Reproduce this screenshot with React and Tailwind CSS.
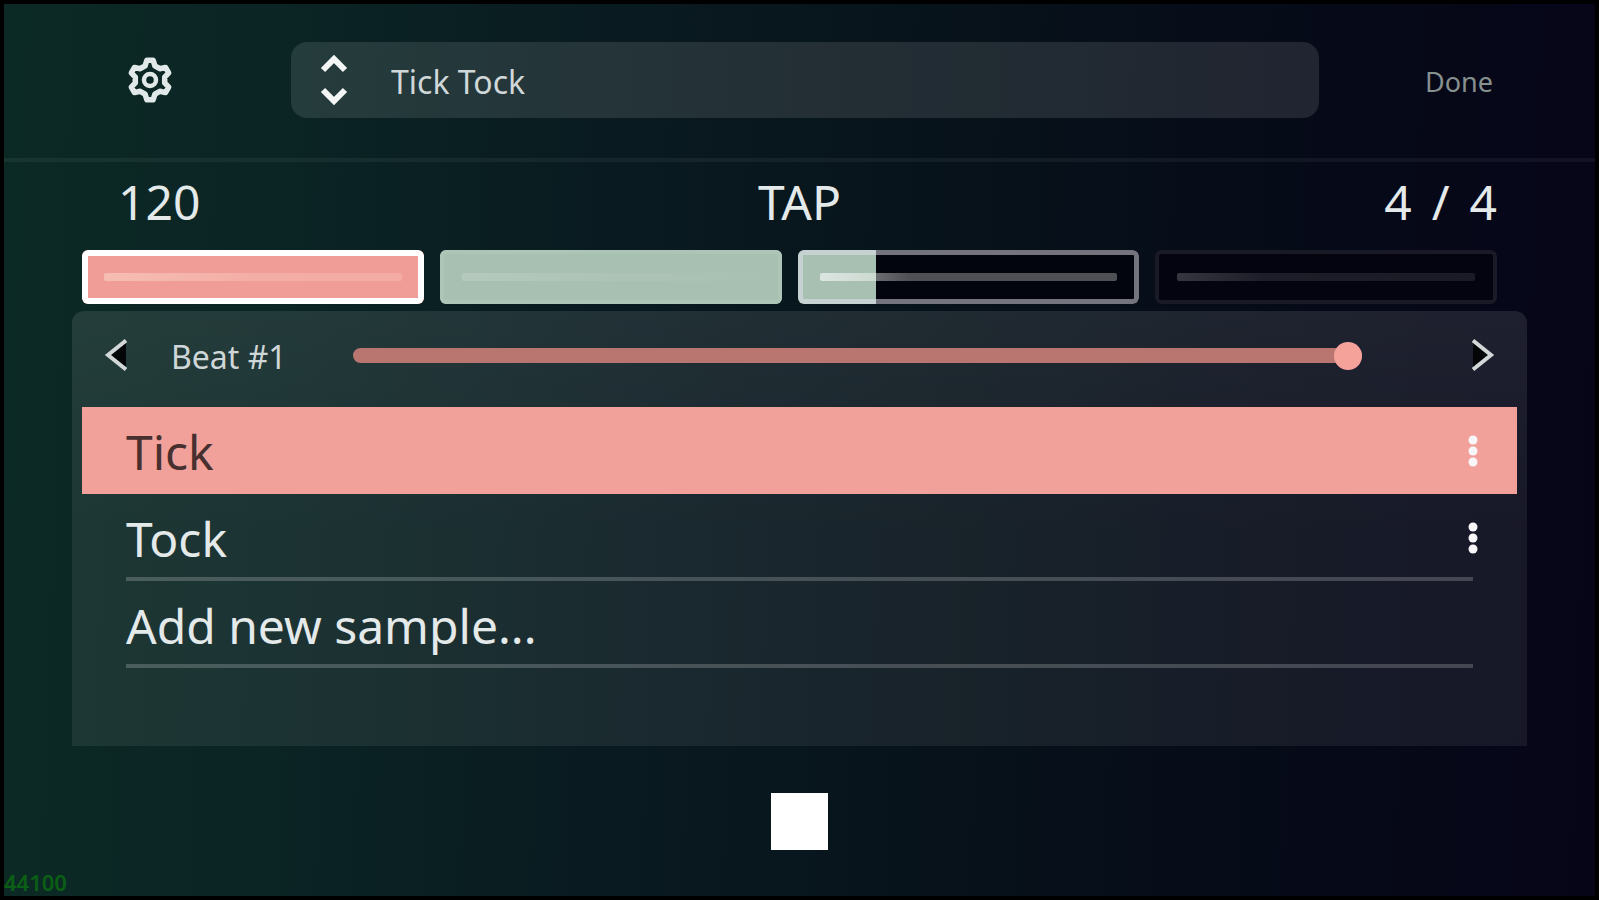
import { useState } from "react";

const samples = ["Tick", "Tock"];

const beats = [
  { id: 1, state: "accent", progress: 100 },
  { id: 2, state: "played", progress: 100 },
  { id: 3, state: "playing", progress: 23 },
  { id: 4, state: "idle", progress: 0 },
];

const beatFills = {
  accent: "bg-[#f19d97]",
  played: "bg-[#a8c0b2]",
  playing: "bg-[#02050d]",
  idle: "bg-[#030410]",
};

const beatOutlines = {
  accent: "border-[6px] border-white",
  played: "border-4 border-[#acc5b6]",
  playing: "border-[5px] border-[#e4e4f0]/50",
  idle: "border-4 border-white/9",
};

const waveColors = {
  accent: "from-[#f6bdb3] via-[#f3aea6] to-[#f3aba3]",
  played: "from-[#b5cabd] via-[#acc3b5] to-[#a9c1b3]",
  playing: "from-white/60 via-white/30 via-30% to-white/30",
  idle: "from-white/20 via-white/10 via-30% to-white/9",
};

// Two base and two tip points for each of the six teeth.
const gearPoints = [0, 60, 120, 180, 240, 300]
  .flatMap((turn) =>
    [
      [-19, 15],
      [-9, 20],
      [9, 20],
      [19, 15],
    ].map(([offset, radius]) => {
      const angle = ((turn + offset) * Math.PI) / 180;
      const x = radius * Math.sin(angle);
      const y = -radius * Math.cos(angle);
      return `${x.toFixed(1)},${y.toFixed(1)}`;
    })
  )
  .join(" ");

const GearIcon = () => (
  <svg
    className="size-12"
    viewBox="-24 -24 48 48"
    fill="none"
    stroke="#e1e9e8"
    strokeWidth="5.500"
    strokeLinejoin="round"
  >
    <polygon points={gearPoints} />
    <circle r="6" strokeWidth="4.500" />
  </svg>
);

const UpDownIcon = () => (
  <svg
    className="pointer-events-none absolute top-3 left-7 h-[52px] w-[30px]"
    viewBox="0 0 30 52"
    fill="none"
    stroke="#f4f6f6"
    strokeWidth="6"
  >
    <path d="M4 16 15 5l11 11M4 36l11 11 11-11" />
  </svg>
);

const ArrowIcon = ({ className }) => (
  <svg className={className} viewBox="0 0 24 34">
    <path d="M22 5 5 17l17 12z" fill="#030506" />
    <path d="M22 2.500 4 17l18 14.500" fill="none" stroke="#d2d7d7" strokeWidth="4" />
  </svg>
);

const DotsIcon = () => (
  <svg className="h-8 w-3" viewBox="0 0 12 32" fill="#f8f6f8">
    <circle cx="6" cy="5" r="4.500" />
    <circle cx="6" cy="16" r="4.500" />
    <circle cx="6" cy="27" r="4.500" />
  </svg>
);

const Beat = ({ beat }) => (
  <button
    aria-label={`Beat ${beat.id}`}
    className={[
      "relative h-[54px] overflow-hidden rounded-md",
      beatFills[beat.state],
    ].join(" ")}
    type="button"
  >
    {beat.state === "playing" ? (
      <span
        className="absolute inset-y-0 left-0 bg-[#a8c0b2]"
        style={{ width: `${beat.progress}%` }}
      />
    ) : null}
    <span
      className={[
        "absolute inset-0 rounded-md",
        beatOutlines[beat.state],
      ].join(" ")}
    />
    <span
      className={[
        "absolute inset-x-[22px] top-1/2 h-2 -translate-y-1/2 rounded-xs bg-linear-to-r",
        waveColors[beat.state],
      ].join(" ")}
    />
  </button>
);

const App = () => {
  const [preset, setPreset] = useState("Tick Tock");
  const [volume, setVolume] = useState(100);
  const [selected, setSelected] = useState("Tick");

  return (
    <div className="relative flex min-h-screen flex-col border-4 border-black bg-[linear-gradient(92deg,#0c2a25_0%,#0b2424_18%,#091a20_40%,#07121a_60%,#060a18_82%,#060518_100%)] bg-origin-border font-['Noto_Sans',sans-serif] text-[#e4e9ea]">
      <header className="flex items-center border-b-4 border-white/5 pt-[38px] pr-[102px] pb-10 pl-[122px]">
        <button aria-label="Settings" type="button">
          <GearIcon />
        </button>
        <div className="relative ml-[117px] flex-1">
          <select
            aria-label="Preset"
            className="block h-[76px] w-full appearance-none rounded-2xl bg-white/11 pt-1 pl-[100px] text-[32px] text-[#d0d7d9] outline-none"
            onChange={(event) => setPreset(event.target.value)}
            value={preset}
          >
            <option>Tick Tock</option>
          </select>
          <UpDownIcon />
        </div>
        <button
          className="ml-[106px] pt-1 text-[27px] text-[#86908f]"
          type="button"
        >
          Done
        </button>
      </header>

      <main className="mx-[68px]">
        <div className="mb-6 grid grid-cols-3 items-center px-[46px] pt-4 text-5xl leading-none">
          <button className="justify-self-start" type="button">
            120
          </button>
          <button className="justify-self-center" type="button">
            TAP
          </button>
          <button
            className="-mr-4 flex gap-5 justify-self-end"
            type="button"
          >
            <span>4</span>
            <span>/</span>
            <span>4</span>
          </button>
        </div>

        <div className="grid grid-cols-4 gap-4 pr-[30px] pl-2.5">
          {beats.map((beat) => (
            <Beat beat={beat} key={beat.id} />
          ))}
        </div>

        <section className="mt-[7px] rounded-t-xl bg-linear-to-b from-white/10 via-white/7 to-white/7 px-2.5 pb-[78px]">
          <div className="flex h-24 items-center px-[22px] pb-2">
            <button aria-label="Previous beat" type="button">
              <ArrowIcon className="h-[34px] w-6" />
            </button>
            <label
              className="ml-[43px] w-[182px] pt-1 text-[32px] leading-none whitespace-nowrap text-[#cfd6d7]"
              htmlFor="volume"
            >
              Beat #1
            </label>
            <input
              className="h-7 min-w-0 flex-1 appearance-none bg-transparent [&::-webkit-slider-runnable-track]:h-[15px] [&::-webkit-slider-runnable-track]:rounded-full [&::-webkit-slider-runnable-track]:bg-[#b97671] [&::-webkit-slider-thumb]:-mt-1.5 [&::-webkit-slider-thumb]:size-7 [&::-webkit-slider-thumb]:appearance-none [&::-webkit-slider-thumb]:rounded-full [&::-webkit-slider-thumb]:bg-[#f5a29b]"
              id="volume"
              max="100"
              min="0"
              onChange={(event) => setVolume(Number(event.target.value))}
              type="range"
              value={volume}
            />
            <button
              aria-label="Next beat"
              className="ml-[109px]"
              type="button"
            >
              <ArrowIcon className="h-[34px] w-6 rotate-180" />
            </button>
          </div>

          <ul className="text-5xl leading-none">
            {samples.map((sample) => (
              <li
                className={
                  selected === sample ? "bg-[#f1a199] text-[#47302f]" : ""
                }
                key={sample}
              >
                <div
                  className={[
                    "relative mx-11 flex h-[87px] border-b-4",
                    selected === sample
                      ? "border-transparent"
                      : "border-white/20",
                  ].join(" ")}
                >
                  <button
                    className="flex-1 pt-1.5 text-left"
                    onClick={() => setSelected(sample)}
                    type="button"
                  >
                    {sample}
                  </button>
                  <button
                    aria-label={`${sample} options`}
                    className="absolute inset-y-0 -right-1.5 pt-1"
                    type="button"
                  >
                    <DotsIcon />
                  </button>
                </div>
              </li>
            ))}
            <li className="mx-11 flex h-[87px] border-b-4 border-white/20">
              <button className="flex-1 pt-1.5 text-left" type="button">
                Add new sample...
              </button>
            </li>
          </ul>
        </section>
      </main>

      <footer className="flex flex-1 items-center justify-center">
        <button
          aria-label="Stop"
          className="size-[57px] bg-white"
          type="button"
        />
        <span className="absolute bottom-0 left-0 text-[22px] leading-7 font-semibold text-[#0b5f15]">
          44100
        </span>
      </footer>
    </div>
  );
};

export default App;
